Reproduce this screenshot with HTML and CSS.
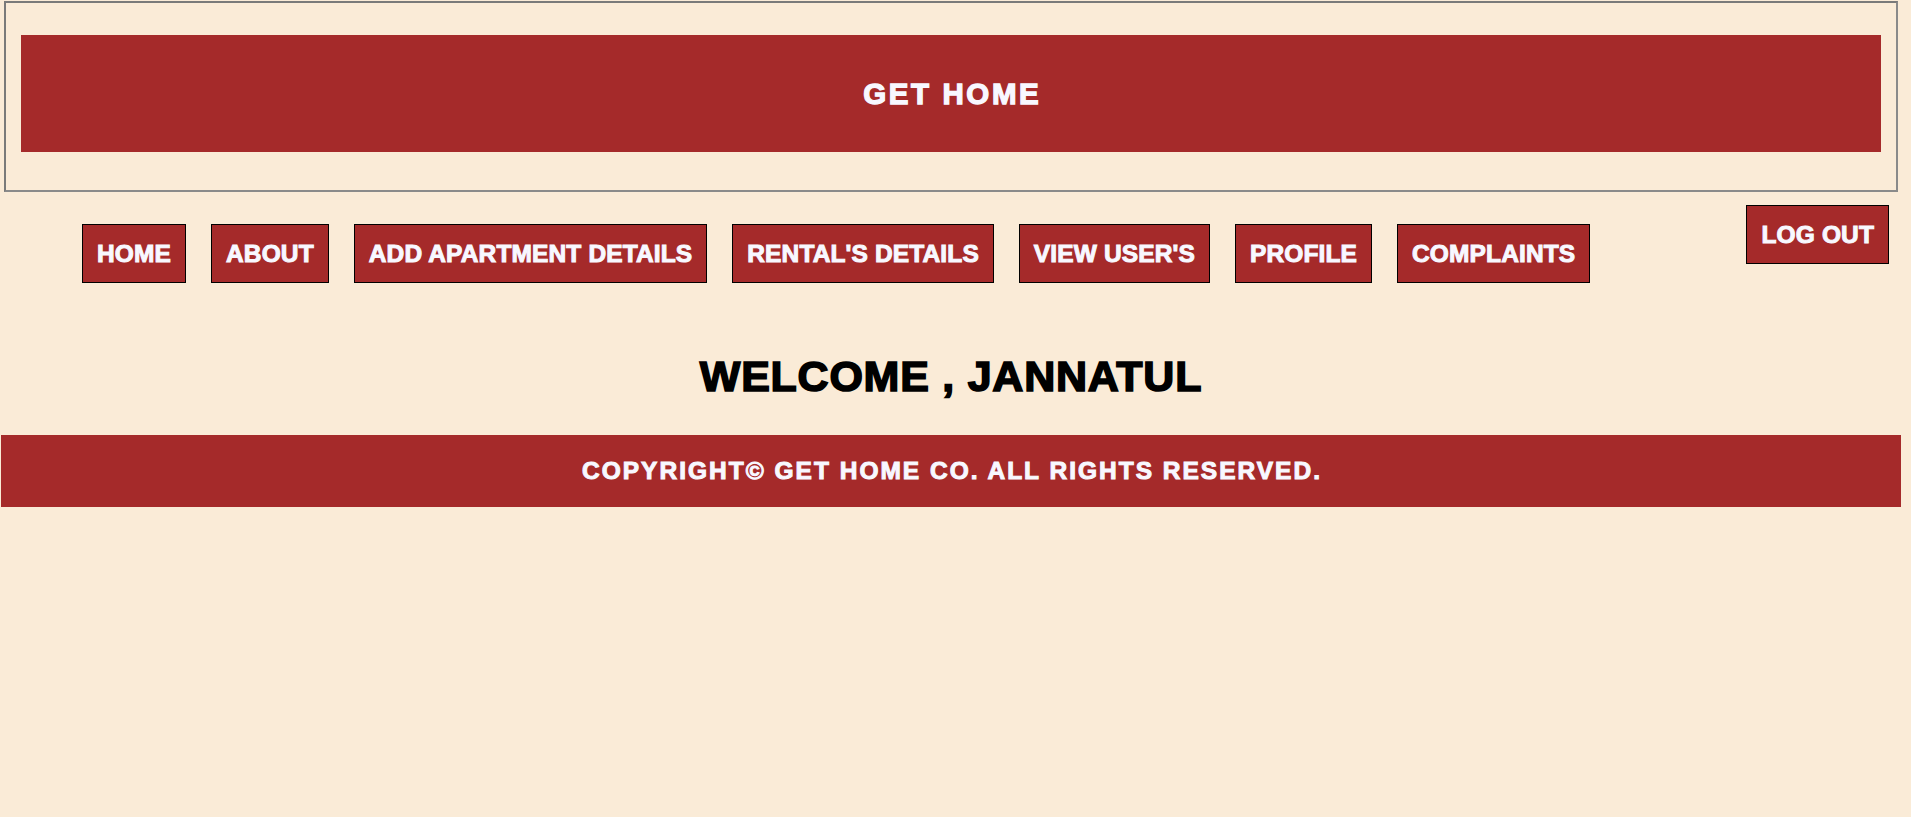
FILE: index.html
```html
<!DOCTYPE html>
<html lang="en">
<head>
<meta charset="utf-8">
<title>Get Home</title>
<link rel="stylesheet" href="styles.css">
</head>
<body>
<div class="page">
  <header class="site-header">
    <div class="brand">GET HOME</div>
  </header>
  <nav class="nav">
    <ul class="nav-links">
      <li><a class="btn" href="#">HOME</a></li>
      <li><a class="btn" href="#">ABOUT</a></li>
      <li><a class="btn" href="#">ADD APARTMENT DETAILS</a></li>
      <li><a class="btn" href="#">RENTAL'S DETAILS</a></li>
      <li><a class="btn" href="#">VIEW USER'S</a></li>
      <li><a class="btn" href="#">PROFILE</a></li>
      <li><a class="btn" href="#">COMPLAINTS</a></li>
    </ul>
    <a class="btn logout" href="#">LOG OUT</a>
  </nav>
  <h1 class="welcome">WELCOME , JANNATUL</h1>
  <footer class="footer">COPYRIGHT© GET HOME CO. ALL RIGHTS RESERVED.</footer>
</div>
</body>
</html>
```
FILE: styles.css
```css
html, body {
  margin: 0;
  padding: 0;
  background: #faebd7;
}
body {
  font-family: "Liberation Sans", Arial, sans-serif;
  font-weight: bold;
  min-height: 817px;
}
.page {
  margin-right: 9px;
  padding-top: 1px;
}
.site-header {
  margin: 0 4px;
  border: 2px solid #8a8a8a;
  border-top-color: #7a7a7a;
  border-left-color: #7a7a7a;
  padding: 32px 15px 38px 15px;
}
.brand {
  background: #a52a2a;
  color: #f8f8ff;
  height: 117px;
  display: flex;
  align-items: center;
  justify-content: center;
  font-size: 29.5px;
  letter-spacing: 2.6px;
  padding-left: 2.6px;
  -webkit-text-stroke: 1.3px #f8f8ff;
}
.nav {
  display: flex;
  align-items: flex-start;
  padding: 13px 13px 0 82px;
}
.nav-links {
  display: flex;
  gap: 25px;
  list-style: none;
  margin: 19px 0 0 0;
  padding: 0;
}
.btn {
  display: block;
  background: #a52a2a;
  color: #f8f8ff;
  border: 1px solid #000;
  font-size: 24.5px;
  line-height: 29px;
  letter-spacing: 0.13px;
  padding: 14px;
  text-decoration: none;
  white-space: nowrap;
  -webkit-text-stroke: 1px #f8f8ff;
}
.logout {
  margin-left: auto;
}
.welcome {
  margin: 69px 0 0 0;
  text-align: center;
  color: #000;
  font-size: 43px;
  line-height: 49px;
  letter-spacing: 0.75px;
  -webkit-text-stroke: 1.6px #000;
}
.footer {
  margin: 34px 1px 0 1px;
  height: 72px;
  background: #a52a2a;
  color: #f8f8ff;
  display: flex;
  align-items: center;
  justify-content: center;
  font-size: 24.5px;
  letter-spacing: 2px;
  padding-left: 2px;
  -webkit-text-stroke: 1px #f8f8ff;
}
```
